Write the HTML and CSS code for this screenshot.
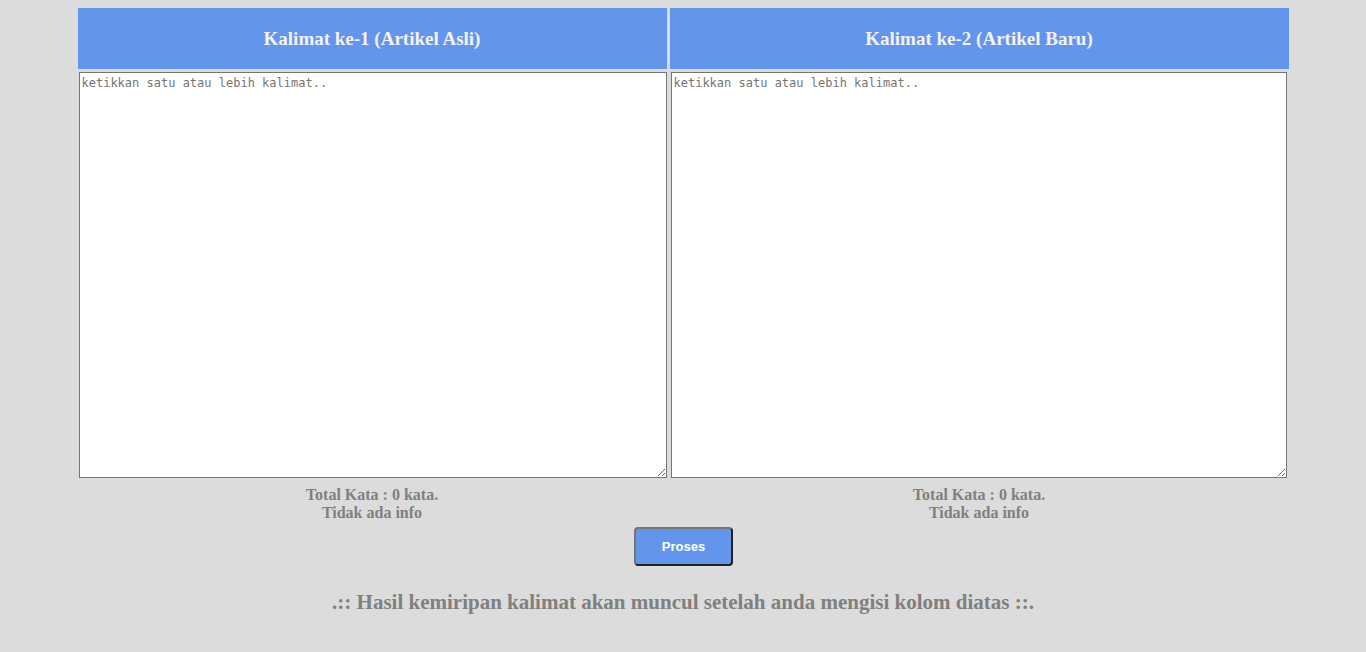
FILE: index.html
```html
<!DOCTYPE html>
<html>
<head>
<meta charset="utf-8">
<link rel="stylesheet" href="styles.css">
</head>
<body>
<div class="board">
  <div class="head">Kalimat ke-1 (Artikel Asli)</div>
  <div class="head">Kalimat ke-2 (Artikel Baru)</div>
  <div class="cell"><textarea class="box box-left" placeholder="ketikkan satu atau lebih kalimat.."></textarea></div>
  <div class="cell"><textarea class="box box-right" placeholder="ketikkan satu atau lebih kalimat.."></textarea></div>
  <div class="info">Total Kata : 0 kata.<br>Tidak ada info</div>
  <div class="info">Total Kata : 0 kata.<br>Tidak ada info</div>
</div>
<div class="actions"><button class="btn">Proses</button></div>
<div class="result">.:: Hasil kemiripan kalimat akan muncul setelah anda mengisi kolom diatas ::.</div>
</body>
</html>
```
FILE: styles.css
```css
html, body {
  margin: 0;
  padding: 0;
  background: #dcdcdc;
}
body {
  padding-top: 8px;
  font-family: "Liberation Serif", serif;
}
.board {
  width: 1211px;
  margin: 0 auto;
  display: grid;
  grid-template-columns: 589px 619px;
  column-gap: 3px;
  row-gap: 0;
}
.head {
  height: 61px;
  background: #6495ed;
  color: #f2f2f2;
  font-weight: bold;
  font-size: 19px;
  display: flex;
  align-items: center;
  justify-content: center;
}
.cell {
  padding: 3px 0 0 1px;
}
.box {
  display: block;
  box-sizing: border-box;
  height: 406px;
  margin: 0;
  padding: 3px 2px 2px;
  border: 1px solid #767676;
  background: #fff;
  font-family: "DejaVu Sans Mono", monospace;
  font-size: 12px;
  resize: both;
  outline: none;
}
.box::placeholder {
  color: #757575;
}
.box-left { width: 588px; }
.box-right { width: 616px; }
.info {
  padding-top: 8px;
  text-align: center;
  color: #808080;
  font-weight: bold;
  font-size: 16px;
  line-height: 18px;
}
.actions {
  display: flex;
  justify-content: center;
  padding-top: 5px;
}
.btn {
  width: 99px;
  height: 39px;
  background: #6495ed;
  color: #fff;
  font-family: "Liberation Sans", Arial, sans-serif;
  font-weight: bold;
  font-size: 13px;
  border: 2px solid;
  border-color: #767676 #222 #222 #767676;
  border-radius: 4px;
  padding: 0;
  margin-left: 1px;
}
.result {
  text-align: center;
  color: #808080;
  font-weight: bold;
  font-size: 21px;
  padding-top: 24px;
}
```
